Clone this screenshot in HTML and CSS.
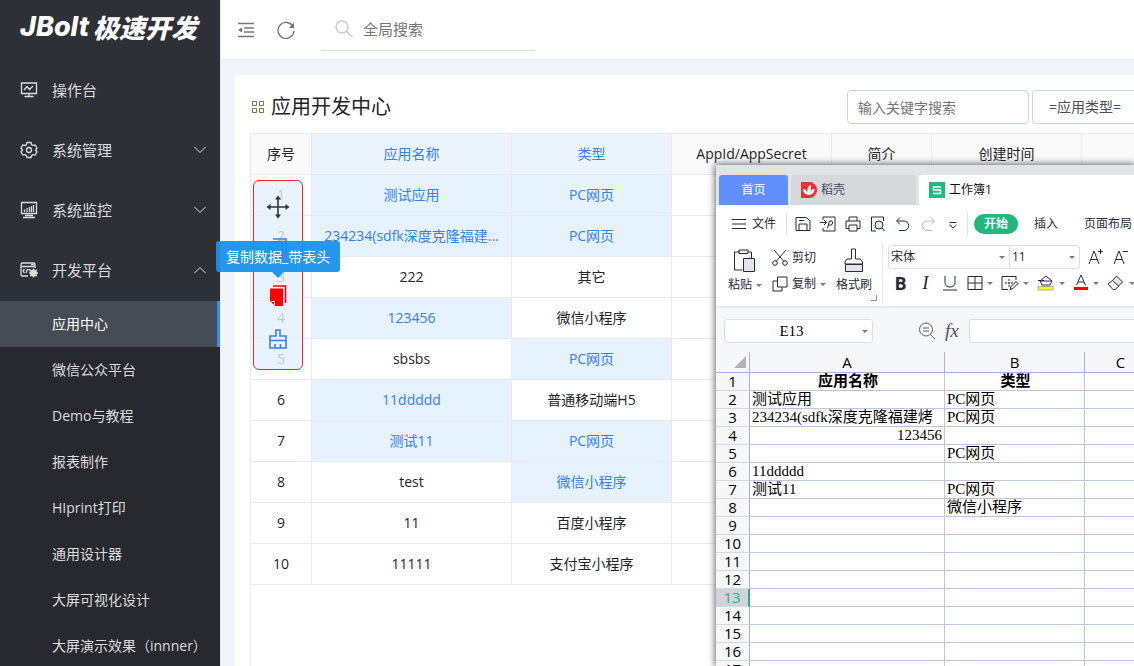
FILE: index.html
```html
<!DOCTYPE html>
<html lang="zh-CN">
<head>
<meta charset="utf-8">
<title>JBolt极速开发</title>
<link rel="stylesheet" href="styles.css">
</head>
<body>
<div class="app">
  <aside class="sidebar">
    <h1 class="logo"><span class="logo-en">JBolt</span><span class="logo-cn">极速开发</span></h1>
    <nav class="menu">
      <a class="menu-item" href="#">
        <svg class="menu-icon" viewBox="0 0 18 18"><path d="M1.500 2h15v10.500h-15zM9 12.500v3M4.500 15.500h9M4 9l3-3.500 2.500 3L13 5"/></svg>
        <span>操作台</span>
      </a>
      <a class="menu-item" href="#">
        <svg class="menu-icon" viewBox="0 0 18 18"><path d="M7 1.500h4l.7 2.200 1.300.8 2.200-.6 1.800 3.200-1.500 1.900 1.500 1.900-1.800 3.200-2.200-.5-1.300.8-.7 2.100H7l-.7-2.100-1.300-.8-2.200.5L1 10.900 2.500 9 1 7.100l1.800-3.200 2.200.6 1.300-.8z"/><circle cx="9" cy="9" r="2.500"/></svg>
        <span>系统管理</span>
        <svg class="chevron" viewBox="0 0 12 8"><path d="M.5 1 6 6.500 11.500 1"/></svg>
      </a>
      <a class="menu-item" href="#">
        <svg class="menu-icon" viewBox="0 0 18 18"><path d="M1.500 1.500h15v11h-15zM5 14.500h8M3 16.500h12M4.500 11V8.500M7 11V7M9.500 11V6M11.500 11V5M13.500 11V4"/></svg>
        <span>系统监控</span>
        <svg class="chevron" viewBox="0 0 12 8"><path d="M.5 1 6 6.500 11.500 1"/></svg>
      </a>
      <a class="menu-item" href="#">
        <svg class="menu-icon" viewBox="0 0 18 18"><path d="M8 15H2.500a1.500 1.500 0 0 1-1.500-1.500v-10A1.500 1.500 0 0 1 2.500 2h11A1.500 1.500 0 0 1 15 3.500V7M1 5.500h14M11 3.700h3M4.500 8 3 10l1.500 2M6 12l1.500-4M8.500 8l1.500 2"/><circle cx="13.500" cy="12" r="2.500" stroke-width="2"/><path d="M13.500 7.500v9M9 12h9M10.300 8.800l6.400 6.400M16.700 8.800l-6.400 6.400"/></svg>
        <span>开发平台</span>
        <svg class="chevron" viewBox="0 0 12 8"><path d="M.5 7 6 1.500 11.500 7"/></svg>
      </a>
      <div class="submenu">
        <a class="sub-item active" href="#">应用中心</a>
        <a class="sub-item" href="#">微信公众平台</a>
        <a class="sub-item" href="#">Demo与教程</a>
        <a class="sub-item" href="#">报表制作</a>
        <a class="sub-item" href="#">HIprint打印</a>
        <a class="sub-item" href="#">通用设计器</a>
        <a class="sub-item" href="#">大屏可视化设计</a>
        <a class="sub-item" href="#">大屏演示效果（innner）</a>
      </div>
    </nav>
  </aside>

  <main class="main">
    <header class="topbar">
      <button class="icon-btn" aria-label="折叠菜单"><svg width="18" height="18" viewBox="0 0 18 18"><path d="M1 2.500h16M7 7h10M7 11h10M1 15.500h16"/><path class="solid" d="M1 9l4-2.500v5z"/></svg></button>
      <button class="icon-btn" aria-label="刷新"><svg width="18" height="18" viewBox="0 0 18 18"><path d="M16 5.500A8 8 0 1 0 17 10"/><path class="solid" d="M17 1.500V7h-5z"/></svg></button>
      <label class="global-search">
        <svg width="18" height="18" viewBox="0 0 18 18"><circle cx="7" cy="7" r="6"/><path d="M11.500 11.500 17.500 17"/></svg>
        <input type="text" placeholder="全局搜索" aria-label="全局搜索">
      </label>
    </header>
    <section class="card">
      <div class="card-head">
        <h2 class="card-title"><svg width="12" height="12" viewBox="0 0 12 12"><path d="M.5.5h4v4h-4zM7.500.5h4v4h-4zM.5 7.500h4v4h-4zM7.500 7.500h4v4h-4z"/></svg>应用开发中心</h2>
        <input class="field keyword" type="text" placeholder="输入关键字搜索" aria-label="关键字">
        <select class="field type-select" aria-label="应用类型"><option>=应用类型=</option></select>
      </div>
      <div class="table-wrap">
        <table class="data">
          <colgroup><col class="c-no"><col class="c-name"><col class="c-type"><col class="c-type"><col class="c-intro"><col class="c-time"><col></colgroup>
          <thead><tr><th>序号</th><th class="sel">应用名称</th><th class="sel">类型</th><th>AppId/AppSecret</th><th>简介</th><th>创建时间</th><th></th></tr></thead>
          <tbody>
            <tr><td>1</td><td class="sel">测试应用</td><td class="sel">PC网页</td><td></td><td></td><td></td><td></td></tr>
            <tr><td>2</td><td class="sel">234234(sdfk深度克隆福建...</td><td class="sel">PC网页</td><td></td><td></td><td></td><td></td></tr>
            <tr><td>3</td><td>222</td><td>其它</td><td></td><td></td><td></td><td></td></tr>
            <tr><td>4</td><td class="sel">123456</td><td>微信小程序</td><td></td><td></td><td></td><td></td></tr>
            <tr><td>5</td><td>sbsbs</td><td class="sel">PC网页</td><td></td><td></td><td></td><td></td></tr>
            <tr><td>6</td><td class="sel">11ddddd</td><td>普通移动端H5</td><td></td><td></td><td></td><td></td></tr>
            <tr><td>7</td><td class="sel">测试11</td><td class="sel">PC网页</td><td></td><td></td><td></td><td></td></tr>
            <tr><td>8</td><td>test</td><td class="sel">微信小程序</td><td></td><td></td><td></td><td></td></tr>
            <tr><td>9</td><td>11</td><td>百度小程序</td><td></td><td></td><td></td><td></td></tr>
            <tr><td>10</td><td>11111</td><td>支付宝小程序</td><td></td><td></td><td></td><td></td></tr>
          </tbody>
        </table>
      </div>
    </section>
  </main>

  <div class="toolbox">
    <button class="tool move" aria-label="移动"><svg width="24" height="24" viewBox="0 0 24 24"><path d="M12 3v18M3 12h18"/><path class="solid" d="M12 .5l3 4H9zM12 23.500l3-4H9zM.5 12l4-3v6zM23.500 12l-4-3v6z"/></svg></button>
    <button class="tool" aria-label="复制数据"><svg width="18" height="26" viewBox="0 0 18 26"><path d="M4 1h13v16M1 4h12v16H1z"/></svg></button>
    <button class="tool copy-head" aria-label="复制数据_带表头"><svg width="18" height="21" viewBox="0 0 18 21"><path d="M4 1h12.500v17"/><path class="solid" d="M1 3.500h13V21H6l-5-5z"/><path class="fold" d="M2 16.500h3.500V20"/></svg></button>
    <button class="tool" aria-label="清除"><svg width="20" height="20" viewBox="0 0 20 20"><path d="M8 7V1h4v6h6v4.500H2V7zM2 11.500V19h16v-7.500M7 19v-4M12.500 19v-4"/></svg></button>
  </div>
  <div class="tooltip" role="tooltip">复制数据_带表头</div>

  <section class="sheet">
    <div class="tabs">
      <button class="tab home">首页</button>
      <button class="tab docer"><svg width="16" height="16" viewBox="0 0 16 16"><path fill="#fb2a35" d="M0 0h8a8 8 0 0 1 0 16H0z"/><path fill="#fff" d="M7 13C3 12 2 9.500 2 7c2.500.5 4 2 4.500 3.500C6 7 7 4 9.500 2.500c1 2.500.5 5-.5 7.500 1-1.800 2.500-3 4.500-3 0 3-2 6-6.500 6z"/></svg>稻壳</button>
      <button class="tab book"><svg width="16" height="16" viewBox="0 0 16 16"><path fill="#1fba7d" d="M0 0h16v16H0z"/><path d="M12 5H4.500v3h7v3.500H4" fill="none" stroke="#fff" stroke-width="1.500"/></svg>工作簿1</button>
    </div>
    <div class="menubar">
      <button class="file-btn"><svg width="14" height="12" viewBox="0 0 14 12"><path d="M0 1.500h14M0 6h14M0 10.500h14"/></svg>文件</button>
      <div class="quick">
        <button aria-label="保存"><svg width="16" height="16" viewBox="0 0 16 16"><path d="M1 1.500h10.500L15 5v9.500H1zM4 14.500V8h8v6.500M4 4.500h5"/></svg></button>
        <button aria-label="输出PDF"><svg width="16" height="16" viewBox="0 0 16 16"><path d="M3 4V1h12v14H3v-3M0 6.500h6M4 4l2.500 2.500L4 9M7.500 12l2-7h2.500q1.500 2-.5 4H8.500"/></svg></button>
        <button aria-label="打印"><svg width="16" height="16" viewBox="0 0 16 16"><path d="M4 5V1h8v4M4 12.500H1V5h14v7.500h-3M4 9h8v6H4z"/></svg></button>
        <button aria-label="打印预览"><svg width="16" height="16" viewBox="0 0 16 16"><path d="M6 15H1.500V1h12v4M14.500 15l-2.500-3"/><circle cx="9" cy="9" r="4" fill="#e3e4e8"/></svg></button>
        <button aria-label="撤销"><svg width="16" height="16" viewBox="0 0 16 16"><path d="M5 1.500 1.500 5 5 8.500M2 5h7a4.500 4.500 0 0 1 0 9.500H4"/></svg></button>
        <button class="dim" aria-label="恢复"><svg width="16" height="16" viewBox="0 0 16 16"><path d="M11 1.500 14.500 5 11 8.500M14 5H7a4.500 4.500 0 0 0 0 9.500h5"/></svg></button>
        <button aria-label="更多"><svg width="16" height="16" viewBox="0 0 16 16"><path d="M4.500 6.500h7M4.500 9l3.500 3 3.500-3"/></svg></button>
      </div>
      <button class="menu-tab current">开始</button>
      <button class="menu-tab">插入</button>
      <button class="menu-tab">页面布局</button>
    </div>
    <div class="ribbon">
      <div class="clip-group">
        <button class="big"><svg width="24" height="26" viewBox="0 0 24 26"><path d="M7 4H1.500v18H9M15 4h3.500v6M6 2h9v3.500H6z"/><path d="M10.500 10.500h11v13h-11z" fill="#e3e4e8"/></svg><span class="drop">粘贴</span></button>
        <div class="small-tools">
          <button><svg width="16" height="16" viewBox="0 0 16 16"><path d="M2 0l10 11.500M14 0 4 11.500"/><circle cx="3" cy="13" r="2.300"/><circle cx="13" cy="13" r="2.300"/></svg>剪切</button>
          <button><svg width="16" height="16" viewBox="0 0 16 16"><path d="M5.500 1h9.500v10H5.500zM5.500 5H1v10h9v-4"/></svg><span class="drop">复制</span></button>
        </div>
        <button class="big"><svg width="20" height="26" viewBox="0 0 20 26"><path d="M7.500 11V1h4v10h4.500l2.500 3v2H1v-2l2-3z"/><path d="M1.500 16.500h17v7h-17z" fill="#e3e4e8"/></svg>格式刷</button>
      </div>
      <div class="font-group">
        <div class="font-row">
          <span class="pick family"><select aria-label="字体"><option>宋体</option></select></span><span class="pick size"><select aria-label="字号"><option>11</option></select></span>
          <button aria-label="增大字号"><svg width="18" height="18" viewBox="0 0 18 18"><path d="M2 16 7 3l5 13M4 11.500h6M11 3.500h5M13.500 1v5"/></svg></button>
          <button aria-label="减小字号"><svg width="18" height="18" viewBox="0 0 18 18"><path d="M2 16 7 3l5 13M4 11.500h6M11 3.500h5"/></svg></button>
        </div>
        <div class="font-row style-row">
          <button class="bold">B</button>
          <button class="ital">I</button>
          <button aria-label="下划线"><svg width="16" height="16" viewBox="0 0 16 16"><path d="M3 1v6.500q0 4.500 5 4.500t5-4.500V1M1 15h14"/></svg></button>
          <button class="drop" aria-label="边框"><svg width="16" height="16" viewBox="0 0 16 16"><path d="M1 1.500h14v13H1zM8 1.500v13M1 8h14"/></svg></button>
          <button class="drop" aria-label="绘图边框"><svg width="18" height="16" viewBox="0 0 18 16"><path d="M7 14.500H1v-13h14V5"/><path d="M8 4v8M4 8h8" stroke-dasharray="2 1"/><path d="M9 14.500l1-3 5-5 2 2-5 5z" fill="#e3e4e8"/></svg></button>
          <button class="drop" aria-label="填充颜色"><svg width="18" height="16" viewBox="0 0 18 16"><path d="M9 1l6 5-2 4H5L3 6zM1 5.500h6M3 6h12"/><path d="M1 11.500h15v3.500H1z" class="yellow"/></svg></button>
          <button class="drop" aria-label="字体颜色"><svg width="16" height="16" viewBox="0 0 16 16"><path d="M3.500 10 8 0l4.500 10M5 7h6"/><path class="red" d="M1 12h14v3H1z"/></svg></button>
          <button class="drop" aria-label="清除"><svg width="18" height="16" viewBox="0 0 18 16"><path d="M6 14.500 1 9l5-4 6 6-4 3.500z"/><path d="M5.500 5.500 9.500 1l6 6-4 4z" fill="#e3e4e8"/></svg></button>
        </div>
      </div>
    </div>
    <div class="formula">
      <span class="pick name-box"><select aria-label="名称框"><option>E13</option></select></span>
      <svg class="zoom-icon" width="18" height="18" viewBox="0 0 18 18"><circle cx="8" cy="7.500" r="6.500"/><path d="M12.500 12.500 17 17M5 6h6M5 9h6"/></svg>
      <span class="fx">fx</span>
      <input class="formula-input" type="text" aria-label="编辑栏">
    </div>
    <table class="grid">
      <colgroup><col class="g-no"><col class="g-a"><col class="g-b"><col class="g-c"></colgroup>
      <thead><tr><th><svg width="12" height="12" viewBox="0 0 12 12"><path fill="#b3b3b3" d="M12 0v12H0z"/></svg></th><th>A</th><th>B</th><th>C</th></tr></thead>
      <tbody>
        <tr><th>1</th><td class="head">应用名称</td><td class="head">类型</td><td></td></tr>
        <tr><th>2</th><td>测试应用</td><td>PC网页</td><td></td></tr>
        <tr><th>3</th><td>234234(sdfk深度克隆福建烤</td><td>PC网页</td><td></td></tr>
        <tr><th>4</th><td class="num">123456</td><td></td><td></td></tr>
        <tr><th>5</th><td></td><td>PC网页</td><td></td></tr>
        <tr><th>6</th><td>11ddddd</td><td></td><td></td></tr>
        <tr><th>7</th><td>测试11</td><td>PC网页</td><td></td></tr>
        <tr><th>8</th><td></td><td>微信小程序</td><td></td></tr>
        <tr><th>9</th><td></td><td></td><td></td></tr>
        <tr><th>10</th><td></td><td></td><td></td></tr>
        <tr><th>11</th><td></td><td></td><td></td></tr>
        <tr><th>12</th><td></td><td></td><td></td></tr>
        <tr><th class="current">13</th><td></td><td></td><td></td></tr>
        <tr><th>14</th><td></td><td></td><td></td></tr>
        <tr><th>15</th><td></td><td></td><td></td></tr>
        <tr><th>16</th><td></td><td></td><td></td></tr>
        <tr><th>17</th><td></td><td></td><td></td></tr>
      </tbody>
    </table>
  </section>
</div>
</body>
</html>
```

FILE: styles.css
```css
* { box-sizing: border-box; }
body {
  margin: 0;
  font: 14px/20px "Open Sans", "Noto Sans CJK SC", sans-serif;
  color: #212529;
}
button, input, select { font: inherit; color: inherit; }
button { padding: 0; border: 0; background: none; }
select { appearance: none; }
svg { display: block; flex: none; fill: none; stroke: currentColor; }
a { color: inherit; text-decoration: none; }

.app { position: relative; display: flex; height: 100vh; overflow: hidden; background: #f1f4f8; }

/* sidebar */
.sidebar { flex: 0 0 220px; background: #2e3037; color: #dcdcde; overflow: hidden; }
.logo {
  display: flex; align-items: center; gap: 4px;
  height: 60px; margin: 0; padding: 0 0 6px 20px;
  color: #fff; font-style: italic; font-weight: 800; line-height: 32px; white-space: nowrap;
}
.logo-en { font-family: Inter, sans-serif; font-size: 27px; }
.logo-cn { font-family: "Noto Sans CJK SC", sans-serif; font-size: 26px; }
.menu-item { display: flex; align-items: center; height: 60px; padding: 0 14px 0 20px; font-size: 15px; }
.menu-icon { width: 18px; height: 18px; margin-right: 14px; stroke-width: 1.3; }
.chevron { width: 12px; height: 8px; margin-left: auto; }
.submenu { margin-top: 1px; background: #28292e; }
.sub-item { display: flex; align-items: center; height: 46px; padding-left: 52px; white-space: nowrap; }
.sub-item.active { background: #454c54; color: #fff; border-right: 3px solid #3e87f0; }

/* page */
.main { flex: 1; min-width: 0; display: flex; flex-direction: column; overflow: hidden; border-left: 1px solid #e6e9ed; }
.topbar { display: flex; align-items: center; gap: 22px; flex: 0 0 60px; padding-left: 16px; background: #fff; border-bottom: 1px solid #e9ecf0; }
.icon-btn { color: #777; }
.icon-btn svg { stroke-width: 1.4; }
.solid { fill: currentColor; stroke: none; }
.global-search { display: flex; align-items: center; gap: 10px; width: 214px; height: 42px; margin-left: 4px; padding-left: 14px; border-bottom: 1px solid #e2e2e2; color: #ccc; }
.global-search svg { stroke-width: 1.5; }
.global-search input { flex: 1; min-width: 0; padding: 0; border: 0; outline: 0; font-size: 15px; }
input::placeholder { color: #757575; opacity: 1; }
.card { flex: 1; display: flex; flex-direction: column; min-width: 1040px; margin: 15px 0 0 14px; padding: 15px 15px 0; background: #fff; border-radius: 4px 0 0 0; }
.card-head { display: flex; gap: 3px; height: 43px; }
.card-title { display: flex; align-items: center; gap: 7px; flex: 0 0 594px; height: 34px; margin: 0; padding-left: 2px; font-size: 20px; font-weight: 400; }
.card-title svg { color: #8a6d45; }
.field { height: 34px; border: 1px solid #ced4da; border-radius: 4px; background: #fff; }
.keyword { width: 182px; padding: 0 10px; }
.type-select { width: 150px; padding: 0 16px; color: #495057; }
.table-wrap { flex: 1; min-height: 0; overflow: hidden; border: 1px solid #ebebeb; border-width: 1px 0 0 1px; }
.data { width: 100%; table-layout: fixed; border-collapse: separate; border-spacing: 0; text-align: center; }
.c-no { width: 61px; }
.c-name { width: 200px; }
.c-type { width: 160px; }
.c-intro { width: 100px; }
.c-time { width: 150px; }
.data th, .data td { height: 41px; padding: 0; border: 1px solid #ebebeb; border-width: 0 1px 1px 0; font-weight: 400; white-space: nowrap; }
.data th { background: #fafafa; }
.data .sel { background: #e6f2ff; color: #3580f6; }
.data th.sel { background: #ebf4fd; }

/* floating copy tools */
.toolbox { position: absolute; left: 253px; top: 180px; display: flex; flex-direction: column; align-items: center; width: 50px; padding: 4px 0 8px; border: 1px solid #f3252c; border-radius: 6px; background: rgba(226, 240, 255, .8); }
.tool { display: flex; align-items: center; justify-content: center; width: 48px; height: 44px; color: #3580f6; }
.tool svg { stroke-width: 1.6; }
.tool.move { color: #333; }
.tool.copy-head { color: #f00; }
.tool .fold { stroke: #fff; stroke-width: 1; }
.tooltip { position: absolute; left: 216px; top: 241px; padding: 6px 10px 5px; border-radius: 3px; background: rgba(24, 146, 234, .94); color: #fff; white-space: nowrap; }
.tooltip::after { content: ""; position: absolute; left: 56px; top: 100%; border: 6px solid transparent; border-top-color: #2497eb; border-bottom: 0; }

/* spreadsheet window */
.sheet { position: absolute; left: 716px; right: 0; top: 165px; bottom: 0; overflow: hidden; background: #f6f7f9; color: #252b3a; font-size: 12px; line-height: 16px; box-shadow: 0 0 7px 1px rgba(0, 0, 0, .6); }
.sheet button, .sheet select { white-space: nowrap; }
.tabs { display: flex; gap: 3px; padding: 10px 0 0 3px; background: #e1e3e7; }
.tab { display: flex; align-items: center; gap: 4px; flex: none; height: 30px; padding: 0 10px; border-radius: 3px 3px 0 0; }
.tab svg { stroke: none; }
.home { justify-content: center; width: 69px; background: #6190fc; color: #fff; }
.docer { width: 125px; background: #d7d8dc; color: #414b60; }
.book { width: 240px; background: #fff; color: #111; }
.menubar { display: flex; align-items: center; height: 38px; padding-left: 16px; background: #fff; }
.file-btn { display: flex; align-items: center; gap: 6px; height: 24px; padding-right: 10px; border-right: 1px solid #dfe0e3; }
.quick { display: flex; gap: 9px; height: 24px; align-items: center; padding: 0 6px 0 8px; margin-right: 6px; border-right: 1px solid #dfe0e3; }
.dim { color: #b3b5ba; }
.menu-tab { flex: none; height: 20px; margin-right: 26px; }
.menu-tab.current { width: 44px; margin-right: 16px; border-radius: 10px; background: #21b77b; color: #fff; font-weight: 700; }
.ribbon { display: flex; height: 65px; padding-left: 12px; background: #fff; border-bottom: 2px solid #e9eaed; }
.clip-group { position: relative; display: flex; gap: 10px; flex: 0 0 155px; height: 62px; border-right: 1px solid #e8e9ec; }
.clip-group::after { content: ""; position: absolute; right: 5px; bottom: 4px; width: 5px; height: 5px; border: 1px solid #858fa3; border-width: 0 1px 1px 0; }
.big { display: flex; flex-direction: column; align-items: center; gap: 3px; height: 54px; padding-top: 5px; }
.drop { display: inline-flex; align-items: center; gap: 4px; }
.drop::after, .pick::after { content: ""; border: 3px solid transparent; border-top-color: #717b91; border-bottom: 0; }
.small-tools { display: flex; flex-direction: column; gap: 10px; padding-top: 7px; }
.small-tools button { display: flex; align-items: center; gap: 4px; height: 16px; }
.font-group { padding: 2px 0 0 5px; }
.font-row { display: flex; align-items: center; height: 24px; }
.font-row > button { margin-left: 7px; }
.pick { position: relative; display: flex; flex: none; height: 24px; border: 1px solid #dcdee3; background: #fff; }
.pick::after { position: absolute; right: 4px; top: 10px; pointer-events: none; }
.pick select { width: 100%; padding: 0 2px; border: 0; background: none; outline: 0; }
.family { width: 122px; border-radius: 3px 0 0 3px; }
.size { width: 70px; border-left: 0; border-radius: 0 3px 3px 0; }
.style-row { gap: 8px; height: 28px; padding-left: 4px; }
.font-row.style-row > button { flex: none; margin: 0; min-width: 17px; }
.font-row .bold { font-size: 18px; font-weight: 700; }
.font-row .ital { font: italic 19px/20px "Liberation Serif", serif; }
.yellow { fill: #ff0; stroke: #aaa; }
.red { fill: #f00; stroke: none; }
.formula { display: flex; align-items: center; height: 44px; padding: 2px 0 0 8px; }
.name-box { width: 149px; border-radius: 3px; }
.name-box select { text-align: center; text-align-last: center; padding: 0 14px 0 0; font: 15px "Liberation Serif", serif; color: #000; }
.zoom-icon { margin-left: 45px; color: #596178; }
.fx { flex: none; width: 24px; margin-left: 9px; color: #48516a; font: italic 19px/22px "Liberation Serif", serif; }
.formula-input { flex: 1; min-width: 165px; height: 24px; border: 1px solid #d9dbe0; border-right: 0; border-radius: 3px 0 0 3px; background: #fff; }
.grid { width: 441px; table-layout: fixed; border-collapse: separate; border-spacing: 0; background: #fff; color: #000; }
.g-no { width: 34px; }
.g-a { width: 195px; }
.g-b { width: 140px; }
.g-c { width: 72px; }
.grid th, .grid td { height: 18px; padding: 0 0 0 2px; border: 1px solid #bdc6dc; border-width: 0 1px 1px 0; line-height: 17px; white-space: nowrap; }
.grid th { padding: 0; background: #f6f7f9; font-size: 15px; font-weight: 400; text-align: center; }
.grid thead th { height: 21px; border-color: #a9b3cd; line-height: 20px; }
.grid thead svg { margin: 0 0 0 18px; stroke: none; }
.grid tbody th { border-right-color: #a9b3cd; border-bottom-color: #d5d9e3; }
.grid td { font-family: "Liberation Serif", "Noto Sans CJK SC", serif; font-size: 15px; }
.grid .head { font-weight: 700; text-align: center; }
.grid .num { padding-right: 2px; text-align: right; }
.grid tbody th.current { background: #d0d3da; color: #21b77b; border-right: 2px solid #21b77b; }
```
